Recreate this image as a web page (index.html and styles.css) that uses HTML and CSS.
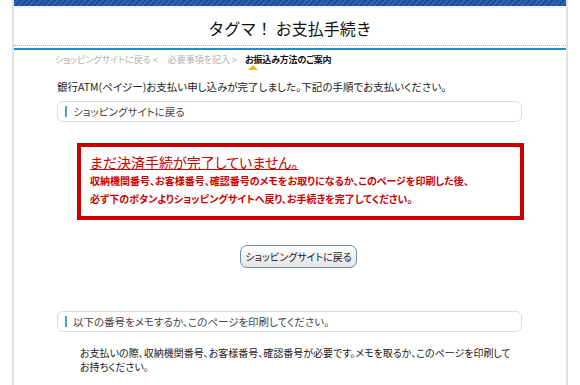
FILE: index.html
```html
<!DOCTYPE html>
<html lang="ja">
<head>
  <meta charset="UTF-8">
  <title>タグマ！ お支払手続き</title>
  <link rel="stylesheet" href="styles.css">
</head>
<body>
  <div class="page">
    <div class="topbar"></div>
    <h1 class="title">タグマ！ お支払手続き</h1>
    <div class="rule"></div>

    <ul class="steps">
      <li>ショッピングサイトに戻る &lt;</li>
      <li>必要事項を記入 &gt;</li>
      <li class="current">お振込み方法のご案内</li>
    </ul>

    <div class="content">
      <p class="lead">銀行ATM(ペイジー)お支払い申し込みが完了しました。下記の手順でお支払いください。</p>

      <div class="box-title">ショッピングサイトに戻る</div>

      <div class="alert">
        <p class="alert-head">まだ決済手続が完了していません。</p>
        <p class="alert-body">収納機関番号、お客様番号、確認番号のメモをお取りになるか、このページを印刷した後、<br>必ず下のボタンよりショッピングサイトへ戻り、お手続きを完了してください。</p>
      </div>

      <div class="actions">
        <button class="back-btn">ショッピングサイトに戻る</button>
      </div>

      <div class="box-title box-memo">以下の番号をメモするか、このページを印刷してください。</div>

      <p class="note">お支払いの際、収納機関番号、お客様番号、確認番号が必要です。メモを取るか、このページを印刷して<br>お持ちください。</p>
    </div>
  </div>
</body>
</html>
```

FILE: styles.css
```css
body {
  margin: 0;
  background: #fff;
  font-family: "Noto Sans CJK JP", "Liberation Sans", sans-serif;
  font-feature-settings: "palt";
  color: #222;
}
p {
  margin: 0;
}
.page {
  width: 552px;
  margin: 0 auto;
  min-height: 385px;
  border-left: 2px solid #e2e2e2;
  border-right: 2px solid #e2e2e2;
}
.topbar {
  height: 6px;
  background: repeating-linear-gradient(135deg, #1d4c98 0 2px, #3464b0 2px 4px);
  border-bottom: 2px solid #f2f2f2;
}
.title {
  margin: 0;
  height: 37px;
  line-height: 40px;
  text-align: center;
  font-size: 16px;
  font-weight: normal;
  font-feature-settings: normal;
  color: #111;
  border-bottom: 1px dotted #8fc0dc;
}
.rule {
  margin-top: 2px;
  height: 2px;
  background: #1c8fd0;
}
.steps {
  list-style: none;
  margin: 0;
  padding: 3px 0 0 41px;
  display: flex;
  gap: 10px;
  font-size: 9px;
  color: #b0b0b0;
  height: 18px;
}
.steps .current {
  position: relative;
  margin-left: -2px;
  font-size: 9px;
  letter-spacing: -0.2px;
  color: #111;
  font-weight: bold;
}
.steps .current::after {
  content: "";
  position: absolute;
  left: 3px;
  top: 12px;
  width: 0;
  height: 0;
  border-left: 5px solid transparent;
  border-right: 5px solid transparent;
  border-bottom: 5px solid #e8b820;
}
.content {
  padding: 9px 44px 0 43px;
}
.lead {
  font-size: 10.5px;
  line-height: 14px;
  color: #222;
}
.box-title {
  margin-top: 7px;
  height: 19px;
  border: 1px solid #dcdcdc;
  border-radius: 6px;
  font-size: 10.5px;
  line-height: 19px;
  color: #444;
  padding-left: 15px;
  position: relative;
}
.box-title::before {
  content: "";
  position: absolute;
  left: 7px;
  top: 4px;
  width: 2px;
  height: 11px;
  background: #4aa6b8;
}
.alert {
  margin: 21px 0 0 20px;
  width: 430px;
  border: 4px solid #cc0000;
  padding: 6px 0 8px 9px;
  color: #cc0000;
}
.alert-head {
  font-size: 14px;
  line-height: 19px;
  text-decoration: underline;
}
.alert-body {
  font-size: 10px;
  font-weight: bold;
  line-height: 18px;
  white-space: nowrap;
}
.actions {
  display: flex;
  justify-content: center;
  padding: 25px 0 0 18px;
}
.back-btn {
  width: 117px;
  height: 23px;
  border: 1px solid #6f8bb0;
  border-radius: 7px;
  background: linear-gradient(#ffffff, #e4e4e4);
  font-family: inherit;
  font-feature-settings: "palt";
  font-size: 10px;
  color: #222;
  padding: 0;
  white-space: nowrap;
}
.box-memo {
  margin-top: 43px;
}
.note {
  margin: 14px 0 0 23px;
  font-size: 10px;
  line-height: 14px;
  color: #222;
  white-space: nowrap;
}
```
